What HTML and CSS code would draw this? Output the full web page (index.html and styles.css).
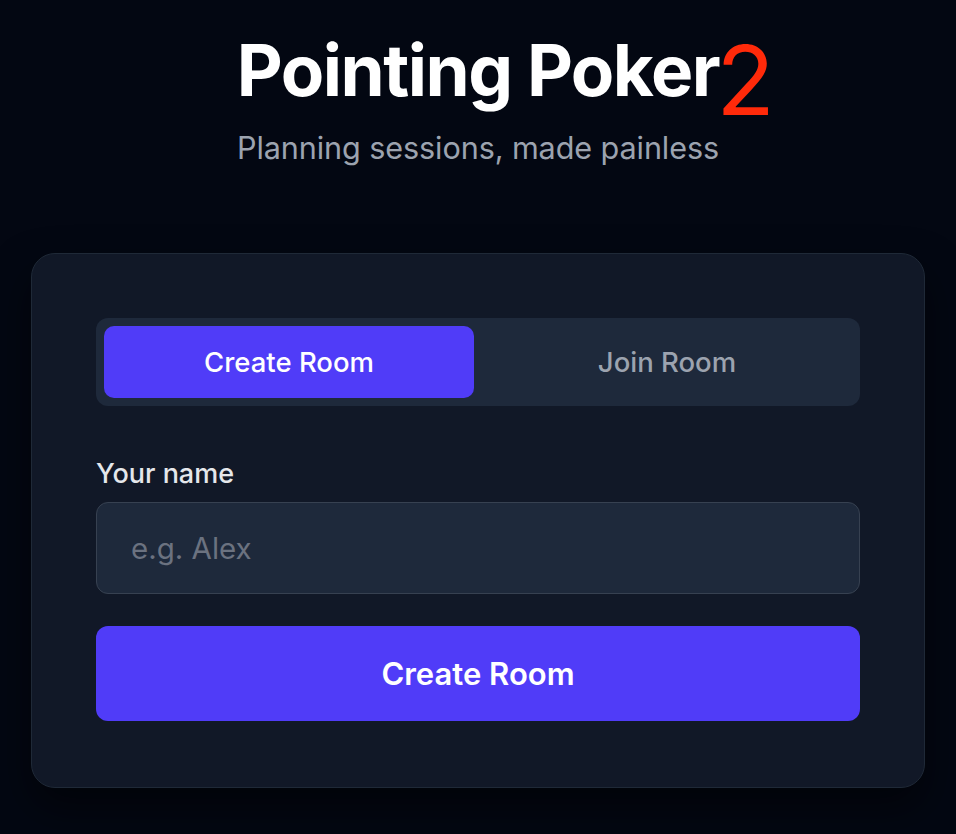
FILE: index.html
```html
<!DOCTYPE html>
<html lang="en">
<head>
<meta charset="utf-8">
<title>Pointing Poker 2</title>
<link rel="stylesheet" href="styles.css">
</head>
<body>
<main class="page">
  <header class="hero">
    <h1 class="title"><span class="title-text">Pointing Poker<span class="title-num">2</span></span></h1>
    <p class="subtitle">Planning sessions, made painless</p>
  </header>
  <section class="card">
    <div class="tabs">
      <button class="tab tab-active">Create Room</button>
      <button class="tab">Join Room</button>
    </div>
    <label class="label" for="name">Your name</label>
    <input class="input" id="name" type="text" placeholder="e.g. Alex">
    <button class="primary">Create Room</button>
  </section>
</main>
</body>
</html>
```
FILE: styles.css
```css
* { box-sizing: border-box; }
html, body { margin: 0; padding: 0; }
body {
  background: #030712;
  font-family: Inter, "Noto Sans", sans-serif;
  color: #fff;
  min-height: 834px;
}
.page {
  display: flex;
  flex-direction: column;
  align-items: center;
  padding-top: 30px;
}
.hero {
  display: flex;
  flex-direction: column;
  align-items: center;
}
.title {
  margin: 0;
  font-size: 71px;
  font-weight: 700;
  line-height: 80px;
  letter-spacing: -1.5px;
}
.title-text { position: relative; }
.title-num {
  position: absolute;
  left: 100%;
  top: 5px;
  margin-left: -3px;
  font-size: 96px;
  font-weight: 400;
  color: #ff2a0a;
  line-height: 1;
  letter-spacing: 0;
}
.subtitle {
  margin: 20px 0 0;
  font-size: 30.6px;
  line-height: 36px;
  color: #9ca3af;
  letter-spacing: -0.1px;
}
.card {
  margin-top: 87px;
  width: 894px;
  background: #111827;
  border: 1px solid #1f2937;
  border-radius: 24px;
  padding: 64px 64px 66px;
  display: flex;
  flex-direction: column;
  box-shadow: 0 20px 40px rgba(0,0,0,0.5);
}
.tabs {
  display: grid;
  grid-template-columns: 1fr 1fr;
  gap: 8px;
  padding: 8px;
  background: #1e293b;
  border-radius: 12px;
}
.tab {
  height: 72px;
  border: 0;
  border-radius: 10px;
  background: transparent;
  color: #9ca3af;
  font-family: inherit;
  font-size: 27.5px;
  font-weight: 500;
}
.tab-active {
  background: #503cf8;
  color: #fff;
}
.label {
  margin-top: 50px;
  font-size: 27px;
  line-height: 36px;
  font-weight: 500;
  color: #e5e7eb;
}
.input {
  margin-top: 10px;
  height: 92px;
  border: 1.5px solid #374151;
  border-radius: 12px;
  background: #1e293b;
  padding: 0 34px;
  font-family: inherit;
  font-size: 29.5px;
  color: #fff;
}
.input::placeholder { color: #6b7280; }
.primary {
  margin-top: 32px;
  height: 95px;
  border: 0;
  border-radius: 12px;
  background: #503cf8;
  color: #fff;
  font-family: inherit;
  font-size: 31px;
  font-weight: 600;
}
```
